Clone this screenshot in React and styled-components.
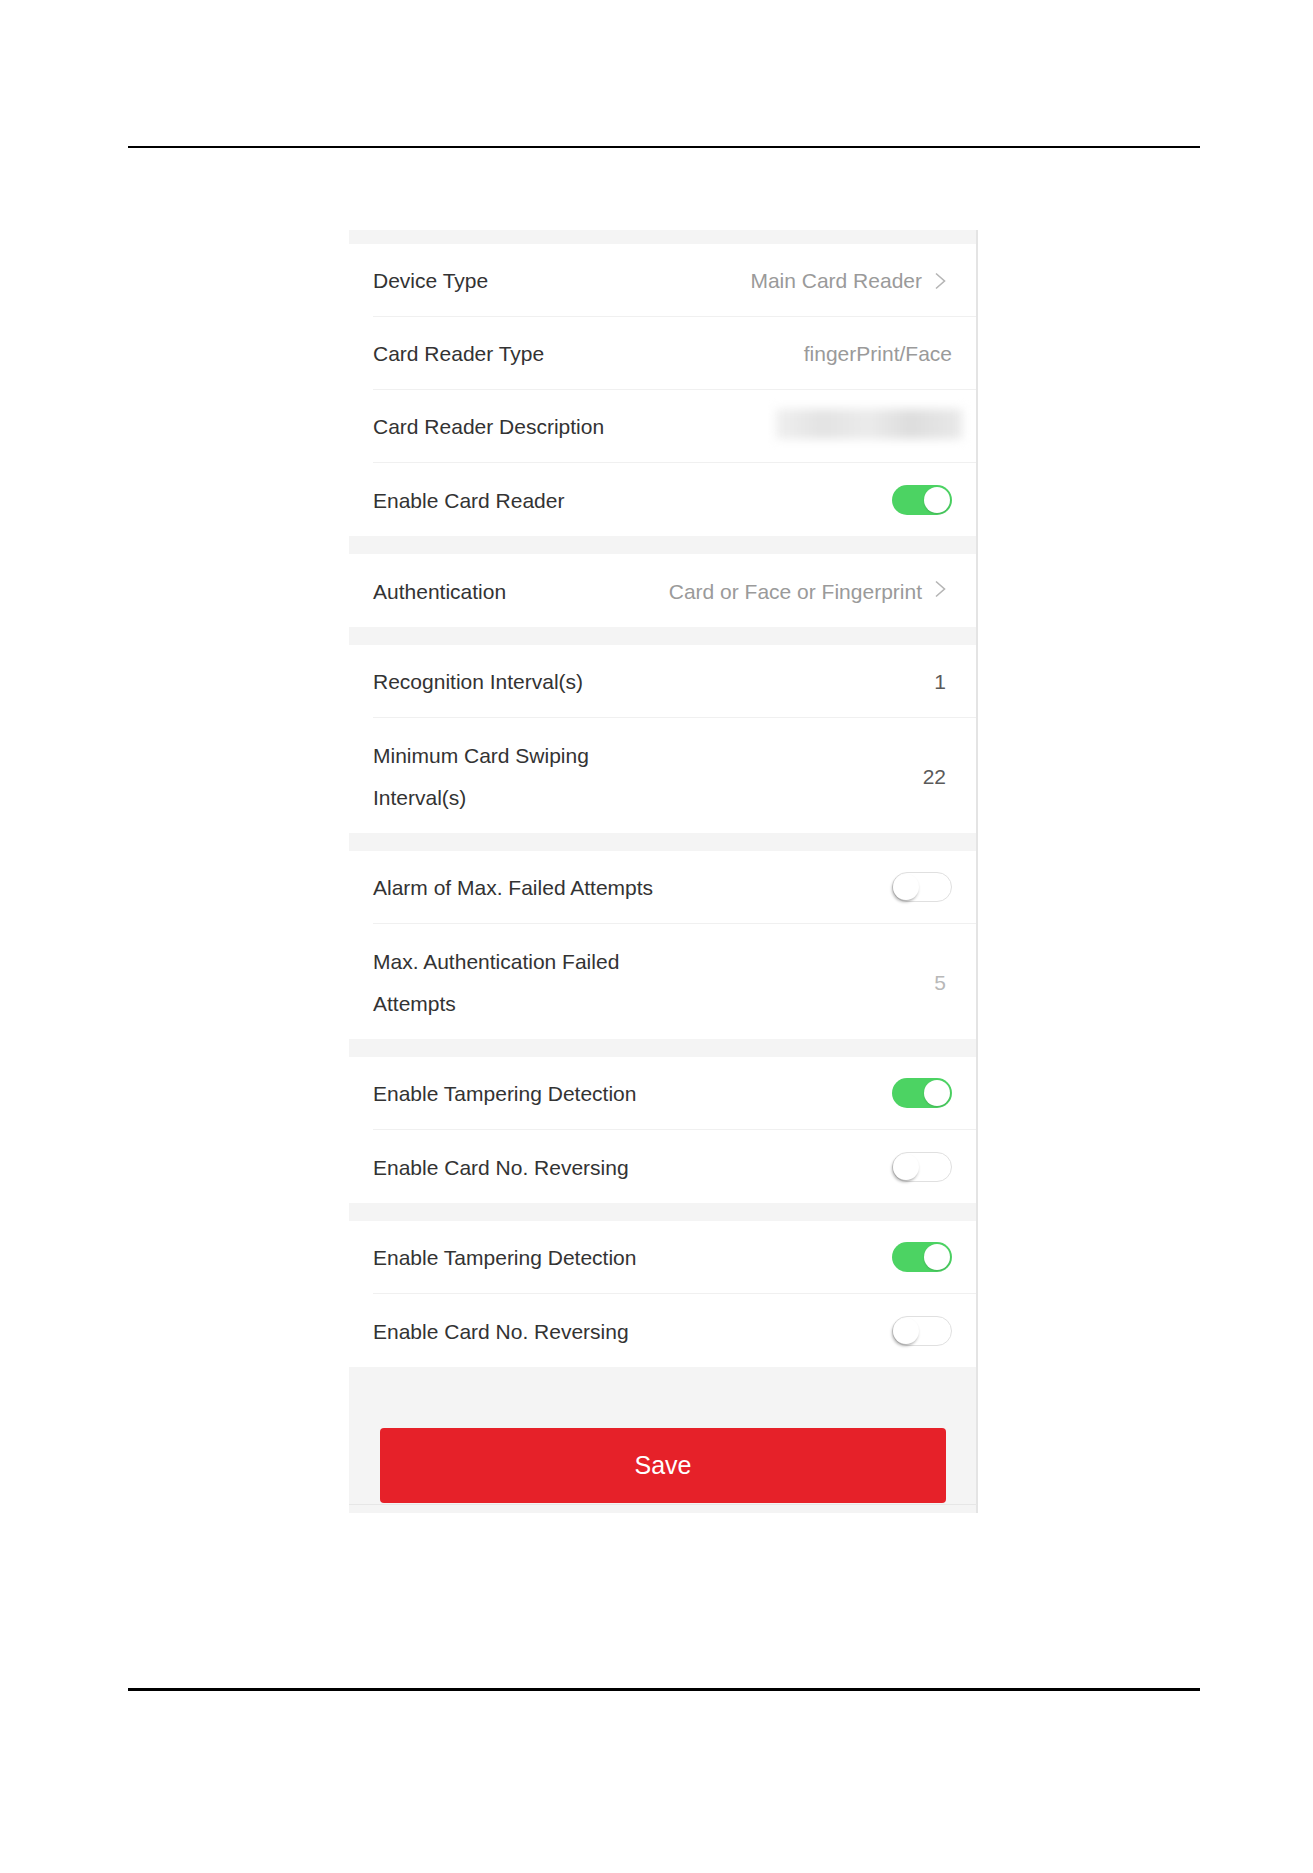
import React from "react";
import styled, { createGlobalStyle } from "styled-components";

const GlobalStyle = createGlobalStyle`
  html, body { margin: 0; padding: 0; background: #ffffff; }
  body { font-family: "Liberation Sans", Arial, sans-serif; }
  * { box-sizing: border-box; }
`;

const Page = styled.div`
  width: 1313px;
  height: 1873px;
  overflow: hidden;
  display: flex;
  flex-direction: column;
  background: #ffffff;
  & > * { flex-shrink: 0; }
`;

const Rule = styled.div`
  height: ${(p) => p.$thick}px;
  margin: ${(p) => p.$top}px 113px 0 128px;
  background: #000000;
`;

const FooterRule = styled.div`
  height: 1px;
  width: 171px;
  margin-top: ${(p) => p.$top}px;
  background: #111111;
`;

const Panel = styled.div`
  width: 629px;
  margin: 82px 0 0 349px;
  background: #f4f4f4;
  border-right: 2px solid #e4e4e4;
  padding-top: 14px;
  display: flex;
  flex-direction: column;
  gap: 18px;
`;

const Group = styled.div`
  background: #ffffff;
  display: flex;
  flex-direction: column;
`;

const Row = styled.div`
  padding-left: 24px;
  background: #ffffff;
`;

const RowInner = styled.div`
  height: ${(p) => (p.$tall ? 115 : 73)}px;
  display: flex;
  align-items: center;
  justify-content: space-between;
  padding-right: 24px;
  border-bottom: ${(p) => (p.$last ? "none" : "1px solid #f0f0f0")};
`;

const Label = styled.div`
  font-size: 21px;
  line-height: 42px;
  color: #333333;
  max-width: 300px;
  padding-top: 2px;
`;

const Value = styled.div`
  display: flex;
  align-items: center;
  gap: 12px;
  font-size: 21px;
  padding-top: 2px;
  color: ${(p) =>
    p.$tone === "num" ? "#5a5a5a" : p.$tone === "disabled" ? "#b8b8b8" : "#9a9a9a"};
  padding-right: ${(p) => (p.$inset ? 6 : 0)}px;
`;

const Chevron = styled.svg`
  width: 12px;
  height: 18px;
  display: block;
  margin-top: ${(p) => p.$lift || 0}px;
`;

const Blurred = styled.div`
  width: 186px;
  height: 30px;
  margin-right: -10px;
  margin-top: -4px;
  background: linear-gradient(90deg, #efefef 0%, #e3e3e3 25%, #ebebeb 50%, #dddddd 72%, #e9e9e9 100%);
  filter: blur(5px);
`;

const Toggle = styled.div`
  width: 60px;
  height: 30px;
  border-radius: 15px;
  display: flex;
  align-items: center;
  justify-content: ${(p) => (p.$on ? "flex-end" : "flex-start")};
  background: ${(p) => (p.$on ? "#4cd363" : "#ffffff")};
  border: ${(p) => (p.$on ? "none" : "1.5px solid #e0e0e0")};
  padding: ${(p) => (p.$on ? "0 2px" : "0")};
`;

const Knob = styled.div`
  width: 26px;
  height: 26px;
  border-radius: 50%;
  background: #ffffff;
  box-shadow: ${(p) =>
    p.$on ? "0 1px 2px rgba(0,0,0,0.15)" : "-1px 2px 3px rgba(0,0,0,0.3)"};
`;

const Footer = styled.div`
  height: 128px;
  background: #f4f4f4;
  display: flex;
  flex-direction: column;
  padding: 43px 30px 0 31px;
`;

const SaveButton = styled.button`
  height: 75px;
  width: 100%;
  flex-shrink: 0;
  border: none;
  border-radius: 4px;
  background: #e62129;
  color: #ffffff;
  font-family: "Liberation Sans", Arial, sans-serif;
  font-size: 25px;
  cursor: pointer;
`;

const BottomLine = styled.div`
  height: 1px;
  margin: 1px -31px 0;
  background: #e6e6e6;
`;

const ChevronIcon = ({ lift }) => (
  <Chevron viewBox="0 0 12 18" $lift={lift}>
    <polyline points="2,1.5 10.5,9 2,16.5" fill="none" stroke="#b5b5b5" strokeWidth="1.6" />
  </Chevron>
);

const groups = [
  [
    { label: "Device Type", value: "Main Card Reader", chevron: true, inset: true },
    { label: "Card Reader Type", value: "fingerPrint/Face" },
    { label: "Card Reader Description", blur: true },
    { label: "Enable Card Reader", toggle: true, on: true },
  ],
  [{ label: "Authentication", value: "Card or Face or Fingerprint", chevron: true, inset: true, lift: -6 }],
  [
    { label: "Recognition Interval(s)", value: "1", tone: "num", inset: true },
    { label: "Minimum Card Swiping Interval(s)", value: "22", tone: "num", inset: true, tall: true },
  ],
  [
    { label: "Alarm of Max. Failed Attempts", toggle: true, on: false },
    { label: "Max. Authentication Failed Attempts", value: "5", tone: "disabled", inset: true, tall: true },
  ],
  [
    { label: "Enable Tampering Detection", toggle: true, on: true },
    { label: "Enable Card No. Reversing", toggle: true, on: false },
  ],
  [
    { label: "Enable Tampering Detection", toggle: true, on: true },
    { label: "Enable Card No. Reversing", toggle: true, on: false },
  ],
];

const renderRight = (item) => {
  if (item.toggle) {
    return (
      <Toggle $on={item.on}>
        <Knob $on={item.on} />
      </Toggle>
    );
  }
  if (item.blur) return <Blurred />;
  return (
    <Value $tone={item.tone} $inset={item.inset}>
      <span>{item.value}</span>
      {item.chevron && <ChevronIcon lift={item.lift} />}
    </Value>
  );
};

export default function App() {
  return (
    <>
      <GlobalStyle />
      <Page>
        <Rule $top={146} $thick={2} />
        <Panel>
          {groups.map((group, gi) => (
            <Group key={gi}>
              {group.map((item, ri) => (
                <Row key={ri}>
                  <RowInner $tall={item.tall} $last={ri === group.length - 1}>
                    <Label>{item.label}</Label>
                    {renderRight(item)}
                  </RowInner>
                </Row>
              ))}
            </Group>
          ))}
          <Footer>
            <SaveButton>Save</SaveButton>
            <BottomLine />
          </Footer>
        </Panel>
        <Rule $top={175} $thick={3} />
        <FooterRule $top={183} />
      </Page>
    </>
  );
}
